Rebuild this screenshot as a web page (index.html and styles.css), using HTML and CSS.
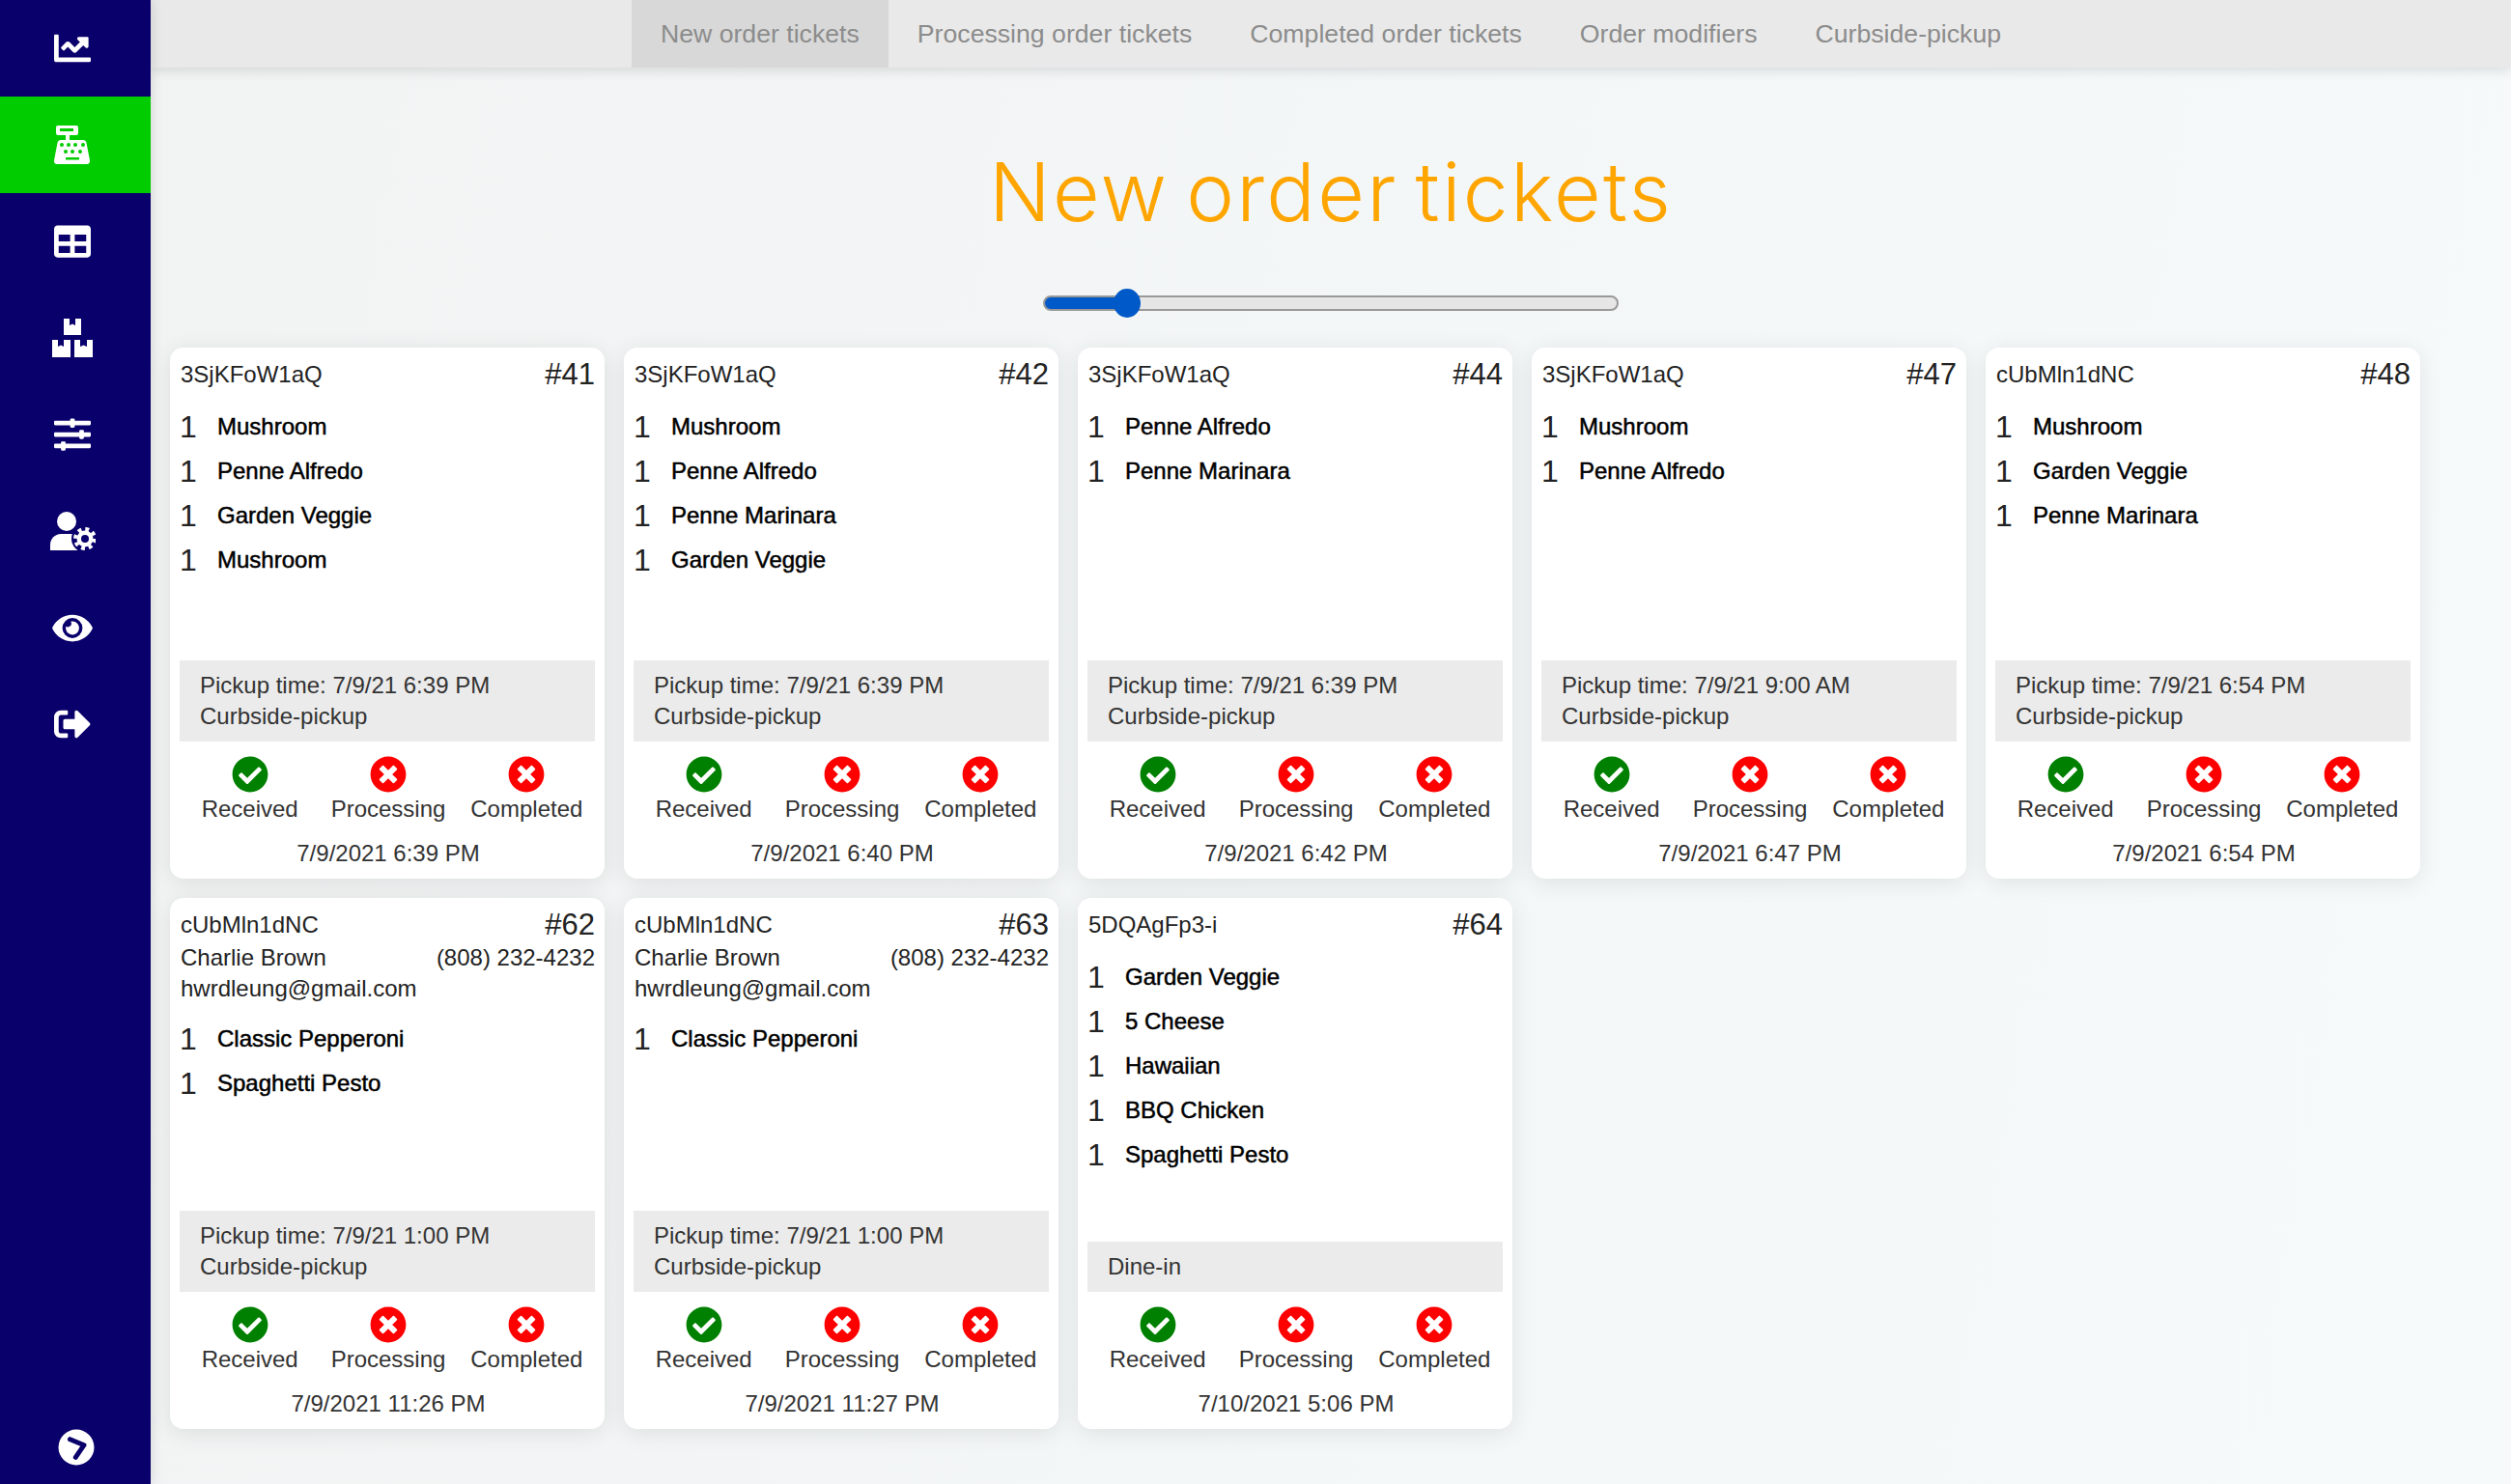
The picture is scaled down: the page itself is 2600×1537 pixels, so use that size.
FILE: index.html
```html
<!DOCTYPE html>
<html lang="en">
<head>
  <meta charset="UTF-8">
  <meta name="viewport" content="width=device-width, initial-scale=1.0">
  <title>New order tickets</title>
  <link rel="stylesheet" href="styles.css">
</head>
<body>
  <svg class="defs" aria-hidden="true">
    <symbol id="ok" viewBox="0 0 512 512"><path d="M504 256c0 136.967-111.033 248-248 248S8 392.967 8 256 119.033 8 256 8s248 111.033 248 248zM227.314 387.314l184-184c6.248-6.248 6.248-16.379 0-22.627l-22.627-22.627c-6.248-6.249-16.379-6.249-22.628 0L216 308.118l-70.059-70.059c-6.248-6.248-16.379-6.248-22.628 0l-22.627 22.627c-6.248 6.248-6.248 16.379 0 22.627l104 104c6.249 6.249 16.379 6.249 22.628.001z"/></symbol>
    <symbol id="no" viewBox="0 0 512 512"><path d="M256 8C119 8 8 119 8 256s111 248 248 248 248-111 248-248S393 8 256 8zm121.6 313.1c4.7 4.7 4.7 12.3 0 17L338 377.6c-4.7 4.7-12.3 4.7-17 0L256 312l-65.1 65.6c-4.7 4.7-12.3 4.7-17 0L134.4 338c-4.7-4.7-4.7-12.3 0-17l65.6-65-65.6-65.1c-4.7-4.7-4.7-12.3 0-17l39.6-39.6c4.7-4.7 12.3-4.7 17 0l65 65.7 65.1-65.6c4.7-4.7 12.3-4.7 17 0l39.6 39.6c4.7 4.7 4.7 12.3 0 17L312 256l65.6 65.1z"/></symbol>
  </svg>

  <nav class="sidebar">
    <a class="nav-item"><svg class="nav-icon" viewBox="0 0 512 512"><path d="M496 384H64V80c0-8.84-7.16-16-16-16H16C7.16 64 0 71.16 0 80v336c0 17.67 14.33 32 32 32h464c8.84 0 16-7.16 16-16v-32c0-8.84-7.16-16-16-16zM464 96H345.94c-21.38 0-32.09 25.85-16.97 40.97l32.4 32.4L288 242.75l-73.37-73.37c-12.5-12.5-32.76-12.5-45.25 0l-68.69 68.69c-6.25 6.25-6.25 16.38 0 22.63l22.62 22.62c6.25 6.25 16.38 6.25 22.63 0L192 237.25l73.37 73.37c12.5 12.5 32.76 12.5 45.25 0l96-96 32.4 32.4c15.12 15.12 40.97 4.41 40.97-16.97V112c.01-8.84-7.15-16-15.99-16z"/></svg></a>
    <a class="nav-item active"><svg class="nav-wide" viewBox="0 0 48 48">
      <path d="M9 4h19a2 2 0 0 1 2 2v6a2 2 0 0 1-2 2h-7v5h14c2 0 3 1 3.500 3L42 40c.3 2.500-1 4-3 4H8c-2 0-3.300-1.500-3-4l3.500-18c.5-2 1.500-3 3.500-3h5v-5H9a2 2 0 0 1-2-2V6a2 2 0 0 1 2-2z"/>
      <g class="hole"><rect x="11" y="7" width="14" height="3"/><circle cx="13" cy="24" r="2"/><circle cx="20" cy="24" r="2"/><circle cx="27" cy="24" r="2"/><circle cx="35" cy="24" r="2"/><circle cx="17" cy="31" r="2"/><circle cx="24" cy="31" r="2"/><circle cx="32" cy="31" r="2"/><rect x="17" y="37" width="14" height="2.500"/></g>
    </svg></a>
    <a class="nav-item"><svg class="nav-icon" viewBox="0 0 512 512"><path d="M464 32H48C21.49 32 0 53.49 0 80v352c0 26.51 21.49 48 48 48h416c26.51 0 48-21.49 48-48V80c0-26.51-21.49-48-48-48zM224 416H64v-96h160v96zm0-160H64v-96h160v96zm224 160H288v-96h160v96zm0-160H288v-96h160v96z"/></svg></a>
    <a class="nav-item"><svg class="nav-wide" viewBox="0 0 48 48">
      <path d="M15 4h6v7l3-1.500L27 11V4h6v17H15z"/>
      <path d="M3 26h6v7l3-1.500 3 1.500v-7h7v18H3z"/>
      <path d="M26 26h6v7l3.500-1.500L39 33v-7h6v18H26z"/>
    </svg></a>
    <a class="nav-item"><svg class="nav-icon" viewBox="0 0 512 512"><path d="M496 384H160v-16c0-8.800-7.200-16-16-16h-32c-8.800 0-16 7.200-16 16v16H16c-8.800 0-16 7.200-16 16v32c0 8.800 7.200 16 16 16h80v16c0 8.800 7.200 16 16 16h32c8.800 0 16-7.200 16-16v-16h336c8.800 0 16-7.200 16-16v-32c0-8.800-7.200-16-16-16zm0-160h-80v-16c0-8.800-7.200-16-16-16h-32c-8.800 0-16 7.200-16 16v16H16c-8.800 0-16 7.200-16 16v32c0 8.800 7.200 16 16 16h336v16c0 8.800 7.200 16 16 16h32c8.800 0 16-7.200 16-16v-16h80c8.800 0 16-7.200 16-16v-32c0-8.800-7.200-16-16-16zm0-160H288V48c0-8.800-7.200-16-16-16h-32c-8.800 0-16 7.200-16 16v16H16C7.200 64 0 71.200 0 80v32c0 8.800 7.200 16 16 16h208v16c0 8.800 7.200 16 16 16h32c8.800 0 16-7.200 16-16v-16h208c8.800 0 16-7.200 16-16V80c0-8.800-7.200-16-16-16z"/></svg></a>
    <a class="nav-item"><svg class="nav-wide" viewBox="0 0 48 48">
      <circle cx="18" cy="14" r="10"/>
      <path d="M1 44v-6c0-6 5-11 11-11h12c4 0 8 2 10 5v12z"/>
      <circle class="gear-gap" cx="37" cy="32" r="14"/>
      <circle cx="37" cy="32" r="8.500"/>
      <circle class="gear-teeth" cx="37" cy="32" r="10"/>
      <circle class="gear-gap" cx="37" cy="32" r="4"/>
    </svg></a>
    <a class="nav-item"><svg class="nav-eye" viewBox="0 0 576 512"><path d="M572.52 241.4C518.29 135.59 410.93 64 288 64S57.68 135.64 3.48 241.41a32.35 32.35 0 0 0 0 29.19C57.71 376.41 165.07 448 288 448s230.32-71.64 284.52-177.41a32.35 32.35 0 0 0 0-29.19zM288 400a144 144 0 1 1 144-144 143.93 143.93 0 0 1-144 144zm0-240a95.31 95.31 0 0 0-25.31 3.79 47.85 47.85 0 0 1-66.9 66.9A95.78 95.78 0 1 0 288 160z"/></svg></a>
    <a class="nav-item"><svg class="nav-icon" viewBox="0 0 512 512"><path d="M497 273L329 441c-15 15-41 4.500-41-17v-96H152c-13.300 0-24-10.700-24-24v-96c0-13.300 10.700-24 24-24h136V88c0-21.400 25.900-32 41-17l168 168c9.300 9.400 9.300 24.600 0 34zM192 436v-40c0-6.600-5.400-12-12-12H96c-17.700 0-32-14.300-32-32V160c0-17.700 14.300-32 32-32h84c6.600 0 12-5.400 12-12V76c0-6.600-5.400-12-12-12H96c-53 0-96 43-96 96v192c0 53 43 96 96 96h84c6.600 0 12-5.400 12-12z"/></svg></a>
    <a class="nav-toggle"><svg class="toggle-icon" viewBox="0 0 38 38">
      <circle cx="19" cy="19" r="18.500"/>
      <path class="toggle-arrow" d="M12.500 10.700 27 16.700 18.300 29.300"/>
    </svg></a>
  </nav>

  <div class="main">
    <header class="topbar">
      <a class="tab active">New order tickets</a>
      <a class="tab">Processing order tickets</a>
      <a class="tab">Completed order tickets</a>
      <a class="tab">Order modifiers</a>
      <a class="tab">Curbside-pickup</a>
    </header>

    <h1 class="title">New order tickets</h1>
    <div class="slider-row"><input class="slider" type="range" min="0" max="8" value="1"></div>

    <div class="tickets">
      <div class="ticket">
        <div class="ticket-body">
          <div class="ticket-head"><span>3SjKFoW1aQ</span><span class="ticket-no">#41</span></div>
          <ul class="items">
            <li><span class="qty">1</span><span class="name">Mushroom</span></li>
            <li><span class="qty">1</span><span class="name">Penne Alfredo</span></li>
            <li><span class="qty">1</span><span class="name">Garden Veggie</span></li>
            <li><span class="qty">1</span><span class="name">Mushroom</span></li>
          </ul>
        </div>
        <div class="info">Pickup time: 7/9/21 6:39 PM<br>Curbside-pickup</div>
        <div class="status">
          <div><svg class="ok"><use href="#ok"/></svg>Received</div>
          <div><svg class="no"><use href="#no"/></svg>Processing</div>
          <div><svg class="no"><use href="#no"/></svg>Completed</div>
        </div>
        <div class="stamp">7/9/2021 6:39 PM</div>
      </div>

      <div class="ticket">
        <div class="ticket-body">
          <div class="ticket-head"><span>3SjKFoW1aQ</span><span class="ticket-no">#42</span></div>
          <ul class="items">
            <li><span class="qty">1</span><span class="name">Mushroom</span></li>
            <li><span class="qty">1</span><span class="name">Penne Alfredo</span></li>
            <li><span class="qty">1</span><span class="name">Penne Marinara</span></li>
            <li><span class="qty">1</span><span class="name">Garden Veggie</span></li>
          </ul>
        </div>
        <div class="info">Pickup time: 7/9/21 6:39 PM<br>Curbside-pickup</div>
        <div class="status">
          <div><svg class="ok"><use href="#ok"/></svg>Received</div>
          <div><svg class="no"><use href="#no"/></svg>Processing</div>
          <div><svg class="no"><use href="#no"/></svg>Completed</div>
        </div>
        <div class="stamp">7/9/2021 6:40 PM</div>
      </div>

      <div class="ticket">
        <div class="ticket-body">
          <div class="ticket-head"><span>3SjKFoW1aQ</span><span class="ticket-no">#44</span></div>
          <ul class="items">
            <li><span class="qty">1</span><span class="name">Penne Alfredo</span></li>
            <li><span class="qty">1</span><span class="name">Penne Marinara</span></li>
          </ul>
        </div>
        <div class="info">Pickup time: 7/9/21 6:39 PM<br>Curbside-pickup</div>
        <div class="status">
          <div><svg class="ok"><use href="#ok"/></svg>Received</div>
          <div><svg class="no"><use href="#no"/></svg>Processing</div>
          <div><svg class="no"><use href="#no"/></svg>Completed</div>
        </div>
        <div class="stamp">7/9/2021 6:42 PM</div>
      </div>

      <div class="ticket">
        <div class="ticket-body">
          <div class="ticket-head"><span>3SjKFoW1aQ</span><span class="ticket-no">#47</span></div>
          <ul class="items">
            <li><span class="qty">1</span><span class="name">Mushroom</span></li>
            <li><span class="qty">1</span><span class="name">Penne Alfredo</span></li>
          </ul>
        </div>
        <div class="info">Pickup time: 7/9/21 9:00 AM<br>Curbside-pickup</div>
        <div class="status">
          <div><svg class="ok"><use href="#ok"/></svg>Received</div>
          <div><svg class="no"><use href="#no"/></svg>Processing</div>
          <div><svg class="no"><use href="#no"/></svg>Completed</div>
        </div>
        <div class="stamp">7/9/2021 6:47 PM</div>
      </div>

      <div class="ticket">
        <div class="ticket-body">
          <div class="ticket-head"><span>cUbMln1dNC</span><span class="ticket-no">#48</span></div>
          <ul class="items">
            <li><span class="qty">1</span><span class="name">Mushroom</span></li>
            <li><span class="qty">1</span><span class="name">Garden Veggie</span></li>
            <li><span class="qty">1</span><span class="name">Penne Marinara</span></li>
          </ul>
        </div>
        <div class="info">Pickup time: 7/9/21 6:54 PM<br>Curbside-pickup</div>
        <div class="status">
          <div><svg class="ok"><use href="#ok"/></svg>Received</div>
          <div><svg class="no"><use href="#no"/></svg>Processing</div>
          <div><svg class="no"><use href="#no"/></svg>Completed</div>
        </div>
        <div class="stamp">7/9/2021 6:54 PM</div>
      </div>

      <div class="ticket">
        <div class="ticket-body">
          <div class="ticket-head"><span>cUbMln1dNC</span><span class="ticket-no">#62</span></div>
          <div class="customer"><span>Charlie Brown</span><span>(808) 232-4232</span></div>
          <div class="customer">hwrdleung@gmail.com</div>
          <ul class="items">
            <li><span class="qty">1</span><span class="name">Classic Pepperoni</span></li>
            <li><span class="qty">1</span><span class="name">Spaghetti Pesto</span></li>
          </ul>
        </div>
        <div class="info">Pickup time: 7/9/21 1:00 PM<br>Curbside-pickup</div>
        <div class="status">
          <div><svg class="ok"><use href="#ok"/></svg>Received</div>
          <div><svg class="no"><use href="#no"/></svg>Processing</div>
          <div><svg class="no"><use href="#no"/></svg>Completed</div>
        </div>
        <div class="stamp">7/9/2021 11:26 PM</div>
      </div>

      <div class="ticket">
        <div class="ticket-body">
          <div class="ticket-head"><span>cUbMln1dNC</span><span class="ticket-no">#63</span></div>
          <div class="customer"><span>Charlie Brown</span><span>(808) 232-4232</span></div>
          <div class="customer">hwrdleung@gmail.com</div>
          <ul class="items">
            <li><span class="qty">1</span><span class="name">Classic Pepperoni</span></li>
          </ul>
        </div>
        <div class="info">Pickup time: 7/9/21 1:00 PM<br>Curbside-pickup</div>
        <div class="status">
          <div><svg class="ok"><use href="#ok"/></svg>Received</div>
          <div><svg class="no"><use href="#no"/></svg>Processing</div>
          <div><svg class="no"><use href="#no"/></svg>Completed</div>
        </div>
        <div class="stamp">7/9/2021 11:27 PM</div>
      </div>

      <div class="ticket">
        <div class="ticket-body">
          <div class="ticket-head"><span>5DQAgFp3-i</span><span class="ticket-no">#64</span></div>
          <ul class="items">
            <li><span class="qty">1</span><span class="name">Garden Veggie</span></li>
            <li><span class="qty">1</span><span class="name">5 Cheese</span></li>
            <li><span class="qty">1</span><span class="name">Hawaiian</span></li>
            <li><span class="qty">1</span><span class="name">BBQ Chicken</span></li>
            <li><span class="qty">1</span><span class="name">Spaghetti Pesto</span></li>
          </ul>
        </div>
        <div class="info">Dine-in</div>
        <div class="status">
          <div><svg class="ok"><use href="#ok"/></svg>Received</div>
          <div><svg class="no"><use href="#no"/></svg>Processing</div>
          <div><svg class="no"><use href="#no"/></svg>Completed</div>
        </div>
        <div class="stamp">7/10/2021 5:06 PM</div>
      </div>
    </div>
  </div>
</body>
</html>
```

FILE: styles.css
```css
html, body {
  height: 100%;
}
body {
  font-family: "Liberation Sans", Arial, sans-serif;
  font-size: 24px;
  line-height: 32px;
  color: #333;
  margin: 0;
  display: flex;
  min-height: 1537px;
  overflow: hidden;
  background: linear-gradient(100deg, #f1f3f3, #f6fafa);
}
.defs {
  display: none;
}

/* sidebar */
.sidebar {
  width: 156px;
  flex-shrink: 0;
  background-color: #0a006b;
  display: flex;
  flex-direction: column;
  position: relative;
  z-index: 2;
  box-shadow: 0 0 12px rgba(0, 0, 0, 0.15);
}
.nav-item {
  height: 100px;
  padding-right: 6px;
  display: flex;
  justify-content: center;
  align-items: center;
  fill: #fff;
}
.nav-item.active {
  background-color: #00cc00;
}
.nav-icon {
  width: 38px;
  height: 38px;
}
.nav-wide {
  width: 48px;
  height: 48px;
}
.nav-eye {
  width: 42px;
  height: 37px;
}
.hole {
  fill: #00cc00;
}
.gear-gap {
  fill: #0a006b;
}
.gear-teeth {
  fill: none;
  stroke: #fff;
  stroke-width: 4;
  stroke-dasharray: 3.900 3.950;
}
.nav-toggle {
  margin-top: auto;
  padding: 0 0 19px 60px;
  fill: #fff;
  line-height: 0;
}
.toggle-icon {
  width: 38px;
  height: 38px;
}
.toggle-arrow {
  fill: none;
  stroke: #0a006b;
  stroke-width: 5;
  stroke-linecap: round;
  stroke-linejoin: round;
}

/* top tabs */
.main {
  flex: 1;
  min-width: 0;
}
.topbar {
  height: 70px;
  background-color: #e9e9e9;
  display: flex;
  justify-content: center;
  box-shadow: 0 3px 12px rgba(0, 0, 0, 0.12);
  position: relative;
}
.tab {
  padding: 0 30px;
  font-size: 26.67px;
  line-height: 70px;
  color: #8c8c8c;
}
.tab.active {
  background-color: #d8d8d8;
}

.title {
  margin: 79px 0 0;
  font-family: Inter, sans-serif;
  font-weight: 300;
  font-size: 84px;
  line-height: 100px;
  letter-spacing: 2.3px;
  word-spacing: -8px;
  color: #ffa500;
  text-align: center;
}

/* size slider */
.slider-row {
  margin-top: 50px;
  height: 30px;
  display: flex;
  justify-content: center;
}
.slider {
  -webkit-appearance: none;
  appearance: none;
  display: block;
  width: 596px;
  height: 30px;
  margin: 0;
  background: none;
}
.slider::-webkit-slider-runnable-track {
  height: 16px;
  box-sizing: border-box;
  border: 2px solid #999;
  border-radius: 8px;
  background: linear-gradient(to right, #0059c8 86px, #e6e6e6 86px);
}
.slider::-webkit-slider-thumb {
  -webkit-appearance: none;
  width: 28px;
  height: 30px;
  margin-top: -9px;
  border-radius: 50%;
  background-color: #0059c8;
}

/* tickets */
.tickets {
  margin-top: 31px;
  padding-left: 20px;
  display: grid;
  grid-template-columns: repeat(5, 450px);
  gap: 20px;
}
.ticket {
  height: 550px;
  box-sizing: border-box;
  padding: 10px;
  background-color: #fff;
  border-radius: 14px;
  box-shadow: 0 4px 24px rgba(0, 0, 0, 0.09);
  display: flex;
  flex-direction: column;
}
.ticket-body {
  flex: 1;
}
.ticket-head, .customer {
  display: flex;
  justify-content: space-between;
  padding-left: 1px;
  color: #222;
}
.ticket-head {
  line-height: 36px;
  align-items: center;
}
.ticket-no {
  font-size: 31px;
}
.items {
  list-style: none;
  margin: 13px 0 0;
  padding: 0;
}
.items li {
  height: 46px;
  display: flex;
  align-items: center;
  color: #000;
}
.qty {
  width: 39px;
  box-sizing: border-box;
  font-size: 32px;
  color: #222;
}
.name {
  -webkit-text-stroke: 0.5px #000;
}
.info {
  padding: 10px 21px;
  background-color: #ebebeb;
}
.status {
  margin: 15px -1px 0 1px;
  display: grid;
  grid-template-columns: repeat(3, 1fr);
  text-align: center;
}
.status svg {
  display: block;
  width: 38px;
  height: 38px;
  margin: 0 auto 1px;
}
.ok {
  fill: #008000;
}
.no {
  fill: #ff0000;
}
.stamp {
  margin-top: 14px;
  padding-left: 2px;
  text-align: center;
}
```
